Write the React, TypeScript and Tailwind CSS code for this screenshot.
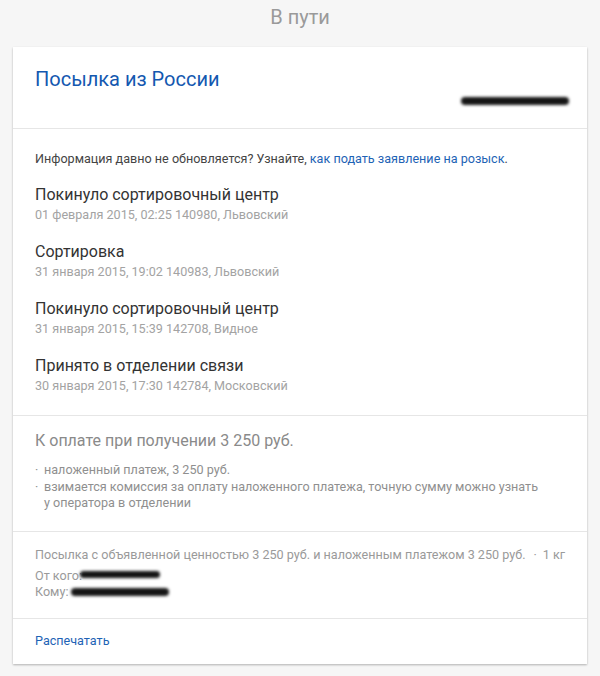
const events = [
  { title: 'Покинуло сортировочный центр', info: '01 февраля 2015, 02:25 140980, Львовский' },
  { title: 'Сортировка', info: '31 января 2015, 19:02 140983, Львовский' },
  { title: 'Покинуло сортировочный центр', info: '31 января 2015, 15:39 142708, Видное' },
  { title: 'Принято в отделении связи', info: '30 января 2015, 17:30 142784, Московский' },
];

const Redacted = ({ className }: { className: string }) => (
  <span className={`inline-block rounded-full bg-[#151515] blur-[1.4px] align-middle ${className}`} />
);

const App = () => {
  return (
    <div className="min-h-[676px] bg-[#f6f6f6] font-['Roboto',sans-serif] px-3 pt-[5px] pb-3">
      <h1 className="text-center text-[20px] leading-6 text-[#9a9a9a] mb-[18px]">В пути</h1>

      <div className="bg-white shadow-[0_1px_2px_rgba(0,0,0,0.28)] mx-px">
        {/* header */}
        <div className="px-[22px] pt-[20px] pb-[23px] border-b border-[#e6e6e6]">
          <h2 className="text-[20px] leading-6 text-[#1458b0]">Посылка из России</h2>
          <div className="flex justify-end -mr-[4px] mt-[6px]">
            <Redacted className="w-[108px] h-[8px]" />
          </div>
        </div>

        {/* history */}
        <div className="px-[22px] pt-[21px] pb-[20px] border-b border-[#e6e6e6]">
          <p className="text-[12.6px] leading-[18px] text-[#444]">
            Информация давно не обновляется? Узнайте,{' '}
            <a href="#" className="text-[#1e63b5]">как подать заявление на розыск</a>.
          </p>
          <div className="mt-[16px] flex flex-col gap-[17px]">
            {events.map((e, i) => (
              <div key={i}>
                <div className="text-[16px] leading-[22px] text-[#333]">{e.title}</div>
                <div className="text-[12.6px] leading-[18px] text-[#a3a3a3]">{e.info}</div>
              </div>
            ))}
          </div>
        </div>

        {/* payment */}
        <div className="px-[22px] pt-[14px] pb-[19px] border-b border-[#e6e6e6]">
          <div className="text-[16px] leading-[22px] text-[#8a8a8a]">К оплате при получении 3 250 руб.</div>
          <ul className="mt-[10px] text-[12.6px] leading-[16.5px] text-[#8f8f8f]">
            <li className="flex">
              <span className="w-[9px] shrink-0">·</span>
              <span>наложенный платеж, 3 250 руб.</span>
            </li>
            <li className="flex">
              <span className="w-[9px] shrink-0">·</span>
              <span>
                взимается комиссия за оплату наложенного платежа, точную сумму можно узнать
                <br />у оператора в отделении
              </span>
            </li>
          </ul>
        </div>

        {/* details */}
        <div className="px-[22px] pt-[14px] pb-[18px] border-b border-[#e6e6e6] text-[12.6px] text-[#9a9a9a]">
          <div className="leading-[18px] whitespace-nowrap">
            Посылка с объявленной ценностью 3 250 руб. и наложенным платежом 3 250 руб.
            <span className="ml-[8px] mr-[6px]">·</span>1 кг
          </div>
          <div className="mt-1 leading-4">
            <div className="flex items-center">
              <span>От кого:</span>
              <Redacted className="w-[80px] h-[7px] -ml-[2px] -mt-[3px]" />
            </div>
            <div className="flex items-center">
              <span>Кому:</span>
              <Redacted className="w-[98px] h-[8px] ml-[3px]" />
            </div>
          </div>
        </div>

        {/* footer */}
        <div className="px-[22px] pt-[13px] pb-[14px] text-[12.6px] leading-[18px]">
          <a href="#" className="text-[#1e63b5]">Распечатать</a>
        </div>
      </div>
    </div>
  );
};

export default App;
